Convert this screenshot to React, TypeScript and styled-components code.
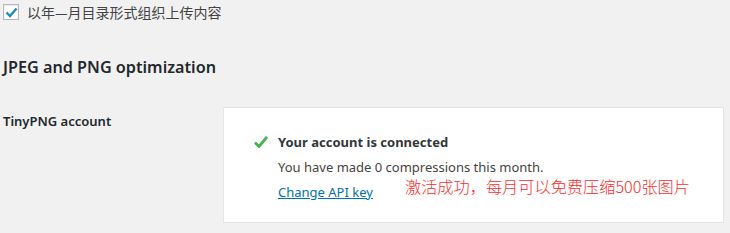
import React from "react";
import styled, { createGlobalStyle } from "styled-components";

const GlobalStyle = createGlobalStyle`
  html, body {
    margin: 0;
    padding: 0;
    background: #f1f1f1;
  }
  body {
    font-family: "Noto Sans", "Noto Sans CJK SC", sans-serif;
    font-size: 13px;
    color: #444;
  }
`;

const Page = styled.div`
  padding: 3px 0 0 3px;
  width: 727px;
  height: 230px;
  overflow: hidden;
`;

const CheckRow = styled.label`
  display: flex;
  align-items: center;
  gap: 8px;
  height: 18px;
  font-size: 14px;
  color: #444;
  font-family: "Noto Sans CJK SC", sans-serif;
`;

const CheckBox = styled.span`
  box-sizing: border-box;
  width: 16px;
  height: 16px;
  border: 1px solid #b4b9be;
  background: #fff;
  box-shadow: inset 0 1px 2px rgba(0, 0, 0, 0.1);
  display: flex;
  align-items: center;
  justify-content: center;
`;

const Heading = styled.h2`
  margin: 34px 0 0;
  font-size: 16.2px;
  font-weight: 600;
  color: #23282d;
  line-height: 24px;
`;

const FormRow = styled.div`
  display: flex;
  margin-top: 28px;
`;

const Label = styled.div`
  width: 220px;
  flex: none;
  font-size: 13px;
  font-weight: 600;
  color: #23282d;
  padding-top: 4px;
  line-height: 20px;
`;

const Card = styled.div`
  position: relative;
  box-sizing: border-box;
  width: 501px;
  height: 116px;
  background: #fff;
  border: 1px solid #e5e5e5;
  padding: 21px 0 0 30px;
`;

const StatusRow = styled.div`
  display: flex;
  align-items: center;
  gap: 10px;
  height: 26px;
`;

const Strong = styled.span`
  font-weight: 700;
  color: #32373c;
  font-size: 13px;
`;

const Line = styled.p`
  margin: 0;
  padding-left: 24px;
  line-height: 25px;
  font-size: 13px;
  color: #444;
`;

const Link = styled.a`
  color: #0073aa;
  text-decoration: underline;
  font-size: 13px;
`;

const Note = styled.span`
  position: absolute;
  left: 181px;
  top: 68px;
  color: #ff2b2b;
  font-size: 16.2px;
  font-family: "Noto Sans CJK SC", sans-serif;
  font-weight: 300;
  line-height: 20px;
`;

export default function App() {
  return (
    <>
      <GlobalStyle />
      <Page>
        <CheckRow>
          <CheckBox>
            <svg width="13" height="11" viewBox="0 0 13 11">
              <path d="M1.5 5.5 L5 9 L11.5 1.5" fill="none" stroke="#1e8cbe" strokeWidth="2.4" />
            </svg>
          </CheckBox>
          以年—月目录形式组织上传内容
        </CheckRow>
        <Heading>JPEG and PNG optimization</Heading>
        <FormRow>
          <Label>TinyPNG account</Label>
          <Card>
            <StatusRow>
              <svg width="14" height="12" viewBox="0 0 14 12">
                <path d="M1 6.5 L5 10.5 L13 1" fill="none" stroke="#46b450" strokeWidth="2.8" />
              </svg>
              <Strong>Your account is connected</Strong>
            </StatusRow>
            <Line>You have made 0 compressions this month.</Line>
            <Line>
              <Link href="#">Change API key</Link>
            </Line>
            <Note>激活成功，每月可以免费压缩500张图片</Note>
          </Card>
        </FormRow>
      </Page>
    </>
  );
}
